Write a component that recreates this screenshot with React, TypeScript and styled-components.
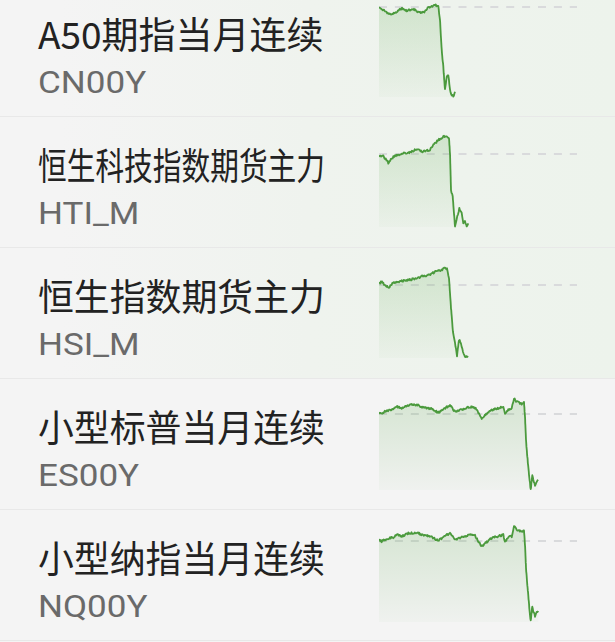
import React, { useLayoutEffect, useRef, useState } from "react";
import styled, { createGlobalStyle } from "styled-components";

const Global = createGlobalStyle`
  html, body { margin: 0; padding: 0; background: #f4f4f4; overflow: hidden; }
  body { width: 615px; height: 642px; }
`;

const List = styled.div`
  margin-top: -14px;
  display: flex;
  flex-direction: column;
`;

const Row = styled.div<{ $tint: boolean }>`
  display: flex;
  height: 130px;
  border-bottom: 1px solid #e8e8e8;
  background: ${(p) =>
    p.$tint
      ? "linear-gradient(90deg, #f4f4f4 10%, #eff3ee 50%, #edf3ec 100%)"
      : "#f4f4f4"};
`;

const TextCol = styled.div`
  width: 379px;
  flex: none;
  box-sizing: border-box;
  padding: 25px 0 0 38px;
  display: flex;
  flex-direction: column;
  align-items: flex-start;
  gap: 10px;
  overflow: visible;
`;

const Title = styled.span`
  display: inline-block;
  white-space: nowrap;
  transform-origin: left center;
  font-family: "Noto Sans CJK SC", "Noto Sans", sans-serif;
  font-size: 37px;
  line-height: 44px;
  color: #222222;
`;

const Code = styled.span`
  display: inline-block;
  white-space: nowrap;
  transform-origin: left center;
  transform: scaleX(1.13);
  font-family: Roboto, "Noto Sans", sans-serif;
  font-size: 31px;
  line-height: 36px;
  color: #6a6a6a;
`;

const ChartSvg = styled.svg`
  display: block;
  flex: none;
  width: 200px;
  height: 130px;
`;

function FitTitle({ text }: { text: string }) {
  const ref = useRef<HTMLSpanElement>(null);
  const [scale, setScale] = useState(1);
  useLayoutEffect(() => {
    const w = ref.current ? ref.current.offsetWidth : 0;
    if (w > 0) setScale(Math.min(1, 287 / w));
  }, [text]);
  return (
    <Title ref={ref} style={{ transform: `scaleX(${scale})` }}>
      {text}
    </Title>
  );
}

function rng(seed: number) {
  let a = seed >>> 0;
  return () => {
    a = (a + 0x6d2b79f5) >>> 0;
    let t = a;
    t = Math.imul(t ^ (t >>> 15), t | 1);
    t ^= t + Math.imul(t ^ (t >>> 7), t | 61);
    return ((t ^ (t >>> 14)) >>> 0) / 4294967296;
  };
}

function buildLine(keys: number[][], seed: number) {
  const r = rng(seed);
  const pts: number[][] = [];
  for (let i = 0; i < keys.length - 1; i++) {
    const [x0, y0] = keys[i];
    const [x1, y1] = keys[i + 1];
    const steps = Math.max(1, Math.round(Math.max(Math.abs(x1 - x0) * 1.5, Math.abs(y1 - y0) / 3)));
    for (let s = 0; s < steps; s++) {
      const t = s / steps;
      const x = x0 + (x1 - x0) * t;
      const y = y0 + (y1 - y0) * t + (i === 0 && s === 0 ? 0 : (r() - 0.5) * 2);
      pts.push([x, y]);
    }
  }
  pts.push(keys[keys.length - 1]);
  return pts;
}

type ChartData = { keys: number[][]; base: number; bottom: number; seed: number };

function Chart({ data, id }: { data: ChartData; id: string }) {
  const pts = buildLine(data.keys, data.seed);
  const d = pts.map((p, i) => `${i ? "L" : "M"}${p[0].toFixed(2)},${p[1].toFixed(2)}`).join(" ");
  const last = pts[pts.length - 1];
  const fill = `${d} L${last[0].toFixed(2)},${data.bottom} L0,${data.bottom} Z`;
  const top = Math.min(...pts.map((p) => p[1]));
  return (
    <ChartSvg viewBox="0 0 200 130">
      <defs>
        <linearGradient id={id} x1="0" y1={top} x2="0" y2={data.bottom} gradientUnits="userSpaceOnUse">
          <stop offset="0" stopColor="#5aa84a" stopOpacity="0.2" />
          <stop offset="1" stopColor="#5aa84a" stopOpacity="0.03" />
        </linearGradient>
      </defs>
      <line x1="0" y1={data.base} x2="198" y2={data.base} stroke="#d9dadc" strokeWidth="2" strokeDasharray="8 7.9" />
      <path d={fill} fill={`url(#${id})`} />
      <path d={d} fill="none" stroke="#4b9a3d" strokeWidth="1.8" strokeLinejoin="round" />
    </ChartSvg>
  );
}

const row2Keys = [
  [0, 39.7], [4.3, 39], [9.3, 45.7], [14.3, 39.7], [22.7, 36.3], [31, 35.3], [37.7, 32.3], [42.7, 34.7],
  [51, 33], [54.3, 28], [59.3, 23], [64.3, 19.7], [67.7, 19], [70, 21.3], [71, 36.3], [72, 73], [73.7, 79.7],
  [76, 109.7], [78.3, 99.7], [80.3, 91.3], [82.7, 96.3], [84.3, 106.3], [86, 104.7], [87.7, 109], [89.3, 106.3],
];

const row4Keys = [
  [0, 33.3], [2.7, 34.3], [7.7, 31.7], [14.3, 30.3], [17.7, 27.7], [22.7, 29.3], [29.3, 26.3], [37.7, 25.7],
  [44.3, 28.3], [52.7, 29.7], [59.3, 33.7], [64.3, 30.3], [71, 26], [76, 32.7], [81, 31], [91, 27.7], [96, 28.7],
  [102.7, 39.3], [107.7, 35], [112.7, 31], [119.3, 29.3], [124.3, 27.7], [126, 35], [129.3, 30.3], [132.7, 29.3],
  [135, 19.3], [137.7, 22.7], [140.3, 23.7], [142.7, 25], [145, 23], [146, 37.7], [147, 61], [148.3, 77.7],
  [150.3, 97.7], [151.7, 111], [153.3, 96], [154.3, 101], [156, 106], [157.7, 102.7], [159.3, 101],
];

const items: { name: string; code: string; tint: boolean; chart: ChartData }[] = [
  {
    name: "A50期指当月连续",
    code: "CN00Y",
    tint: true,
    chart: {
      seed: 11,
      base: 21,
      bottom: 111,
      keys: [
        [0, 21.3], [4.3, 24], [12, 29], [17.7, 25.7], [22.7, 22.3], [27.7, 24.7], [34.3, 23.3], [41, 26.7],
        [46, 25.7], [49.3, 21.3], [56, 19], [59.3, 20.7], [61, 34], [62.7, 64], [64.3, 80.7], [66, 104],
        [67.7, 90.7], [69.3, 89], [71, 104], [72.7, 109], [74.3, 110.7], [76, 105.7],
      ],
    },
  },
  {
    name: "恒生科技指数期货主力",
    code: "HTI_M",
    tint: true,
    chart: { seed: 23, base: 37, bottom: 110, keys: row2Keys },
  },
  {
    name: "恒生指数期货主力",
    code: "HSI_M",
    tint: true,
    chart: {
      seed: 37,
      base: 37,
      bottom: 110,
      keys: [
        [0, 35], [3, 34], [7, 38], [10, 39], [14, 35], [22, 33], [30, 32], [38, 30], [44, 28], [50, 27],
        [56, 24], [62, 22], [66, 20], [68, 21], [70, 30], [72, 60], [74, 85], [76, 95], [78, 108], [80, 92],
        [82, 95], [84, 104], [86, 108], [88, 109], [89, 108],
      ],
    },
  },
  {
    name: "小型标普当月连续",
    code: "ES00Y",
    tint: false,
    chart: { seed: 41, base: 35, bottom: 111, keys: row4Keys },
  },
  {
    name: "小型纳指当月连续",
    code: "NQ00Y",
    tint: false,
    chart: {
      seed: 53,
      base: 31,
      bottom: 112,
      keys: row4Keys.map(([x, y]) => [x, y < 90 ? y - 3 : y]),
    },
  },
];

export default function App() {
  return (
    <>
      <Global />
      <List>
        {items.map((it, i) => (
          <Row key={it.code} $tint={it.tint}>
            <TextCol>
              <FitTitle text={it.name} />
              <Code>{it.code}</Code>
            </TextCol>
            <Chart data={it.chart} id={`g${i}`} />
          </Row>
        ))}
      </List>
    </>
  );
}
